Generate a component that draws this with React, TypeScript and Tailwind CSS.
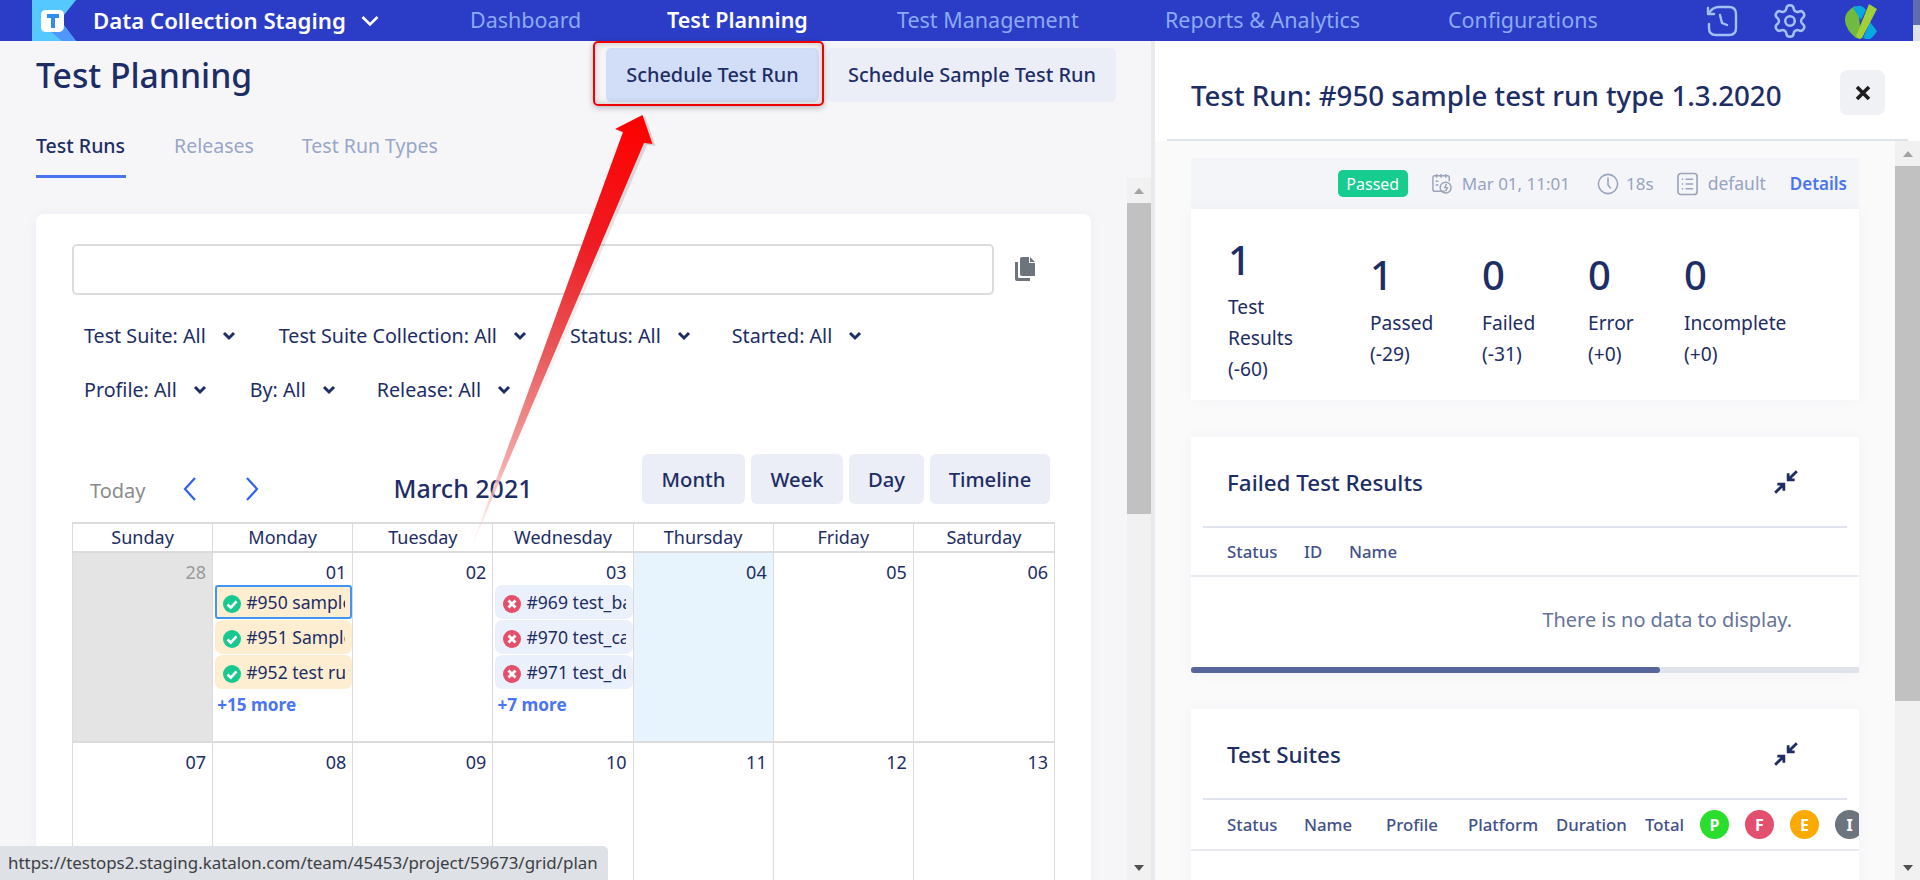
import { Settings } from "lucide-react";

const navy = "text-[#1d2d65]";

const navItems = [
  { label: "Dashboard", w: "w-[110px]", ml: "ml-0", active: false },
  { label: "Test Planning", w: "w-[142px]", ml: "ml-[87px]", active: true },
  { label: "Test Management", w: "w-[181px]", ml: "ml-[88px]", active: false },
  { label: "Reports & Analytics", w: "w-[197px]", ml: "ml-[87px]", active: false },
  { label: "Configurations", w: "w-[150px]", ml: "ml-[86px]", active: false },
];

function Logo() {
  return (
    <svg width="44" height="41" viewBox="0 0 44 41" className="ml-[32px] shrink-0">
      <path d="M0 0H44L28 20L44 41H0Z" fill="#55c9fd" />
      <path d="M18 31L30 41H44L33 27Z" fill="#4f97fb" />
      <path d="M14 10H27Q32 10 32 15V26Q32 32 26 32H14Q9 32 9 27V15Q9 10 14 10Z" fill="#fff" />
      <path d="M15 14H27V18H23V28H19V18H15Z" fill="#2f8cf0" />
    </svg>
  );
}

function HistoryIcon() {
  return (
    <svg width="32" height="32" viewBox="0 0 32 32" fill="none" stroke="#a3c0fb" strokeWidth="2.4" strokeLinecap="round" strokeLinejoin="round" className="shrink-0">
      <path d="M3 8C6 3 9 2 13 2H23Q30 2 30 9V23Q30 30 23 30H10Q3 30 3 23V19" />
      <path d="M2 3V9H8" />
      <path d="M14 10L16 18L21 20" />
    </svg>
  );
}

function AvatarLogo() {
  return (
    <svg width="34" height="36" viewBox="0 0 34 36" className="shrink-0">
      <path d="M11 3Q0 9 1 18Q2 27 12 35L17 36L15 12Z" fill="#6fba3f" />
      <path d="M9 5Q13 2 17 3Q20 4 22 7L17 17Z" fill="#08a8e0" />
      <path d="M26 19L33 28Q31 33 25 37L19 35Z" fill="#08a8e0" />
      <path d="M25 1L33 6L18 35Q14 37 12 33Z" fill="#a3cf37" />
    </svg>
  );
}

function TopBar() {
  return (
    <div className="relative flex h-[41px] shrink-0 items-center bg-[#2b3dc6]">
      <Logo />
      <span className="ml-[17px] w-[252px] shrink-0 text-[22.2px] font-semibold whitespace-nowrap text-white">Data Collection Staging</span>
      <svg width="18" height="12" viewBox="0 0 18 12" className="ml-[16px] shrink-0" fill="none" stroke="#fff" strokeWidth="2.6">
        <path d="M1.5 2L9 9.5L16.5 2" />
      </svg>
      <div className="ml-[91px] flex shrink-0 items-center">
        {navItems.map((n) => (
          <span
            key={n.label}
            className={`${n.w} ${n.ml} shrink-0 text-[21.5px] whitespace-nowrap ${n.active ? "font-semibold text-white" : "text-[#8caaf6]"}`}
          >
            {n.label}
          </span>
        ))}
      </div>
      <div className="ml-[108px] flex shrink-0 items-center">
        <HistoryIcon />
        <Settings size={38} strokeWidth={1.6} className="ml-[33px] shrink-0 text-[#a3c0fb]" />
        <span className="ml-[35px] flex"><AvatarLogo /></span>
      </div>
      <div className="absolute top-0 right-0 h-[41px] w-[7px] bg-[#dfe1ea]">
        <div className="h-[25px] w-full bg-[#5f6caf]" />
      </div>
    </div>
  );
}

function FilterChevron() {
  return (
    <svg width="14" height="10" viewBox="0 0 14 10" fill="none" stroke="#1d2d65" strokeWidth="3" className="ml-[16px] shrink-0">
      <path d="M2 2L7 7L12 2" />
    </svg>
  );
}

function Filter({ label, ml = "ml-0" }: { label: string; ml?: string }) {
  return (
    <div className={`flex items-center ${ml}`}>
      <span className={`text-[19.7px] whitespace-nowrap ${navy}`}>{label}</span>
      <FilterChevron />
    </div>
  );
}

function CheckBadge() {
  return (
    <svg width="18" height="18" viewBox="0 0 18 18" className="shrink-0">
      <circle cx="9" cy="9" r="9" fill="#17c98f" />
      <path d="M4.5 9.5L7.8 12.6L13.5 6.4" fill="none" stroke="#fff" strokeWidth="2.6" />
    </svg>
  );
}

function CrossBadge() {
  return (
    <svg width="18" height="18" viewBox="0 0 18 18" className="shrink-0">
      <circle cx="9" cy="9" r="9" fill="#e3506c" />
      <path d="M5.5 5.5L12.5 12.5M12.5 5.5L5.5 12.5" fill="none" stroke="#fff" strokeWidth="2.8" />
    </svg>
  );
}

function EventChip({ text, kind, selected }: { text: string; kind: "pass" | "fail"; selected?: boolean }) {
  const bg = kind === "pass" ? "bg-[#fdeed1]" : "bg-[#ebf1fc]";
  const border = selected ? "border-2 border-[#3f95f6] rounded-[3px] pl-[6px] pr-[5px]" : "rounded-[7px] pl-[8px] pr-[7px]";
  return (
    <div className={`flex h-[34px] items-center gap-[5px] overflow-hidden ${bg} ${border}`}>
      <span className="mt-[3px] flex">{kind === "pass" ? <CheckBadge /> : <CrossBadge />}</span>
      <span className={`overflow-hidden text-[17.6px] whitespace-nowrap ${navy}`}>{text}</span>
    </div>
  );
}

function DayCell({ day, tone, children }: { day: string; tone?: "muted" | "today"; children?: React.ReactNode }) {
  const bg = tone === "muted" ? "bg-[#e4e4e4]" : tone === "today" ? "bg-[#e8f4fd]" : "bg-white";
  return (
    <div className={`min-w-0 border-r border-[#dcdcdc] last:border-r-0 ${bg}`}>
      <div className={`h-[32px] pt-[6px] pr-[6px] text-right text-[18px] leading-[26px] ${tone === "muted" ? "text-[#9a9a9a]" : navy}`}>{day}</div>
      {children}
    </div>
  );
}

function Calendar() {
  const days = ["Sunday", "Monday", "Tuesday", "Wednesday", "Thursday", "Friday", "Saturday"];
  return (
    <div className="mt-[18px] border-t-2 border-l border-r border-[#dcdcdc]">
      <div className="grid h-[29px] grid-cols-7 border-b-2 border-[#dcdcdc]">
        {days.map((d) => (
          <div key={d} className={`border-r border-[#dcdcdc] text-center text-[18px] leading-[26px] last:border-r-0 ${navy}`}>{d}</div>
        ))}
      </div>
      <div className="grid h-[190px] grid-cols-7 border-b-2 border-[#dcdcdc]">
        <DayCell day="28" tone="muted" />
        <DayCell day="01">
          <div className="ml-[2px] flex flex-col gap-[1px]">
            <EventChip text="#950 sample test run" kind="pass" selected />
            <EventChip text="#951 Sample test" kind="pass" />
            <EventChip text="#952 test run type" kind="pass" />
          </div>
          <div className="mt-[3px] ml-[4px] text-[17.2px] font-bold text-[#4a74f0]">+15 more</div>
        </DayCell>
        <DayCell day="02" />
        <DayCell day="03">
          <div className="ml-[2px] flex flex-col gap-[1px]">
            <EventChip text="#969 test_basic" kind="fail" />
            <EventChip text="#970 test_call" kind="fail" />
            <EventChip text="#971 test_dummy" kind="fail" />
          </div>
          <div className="mt-[3px] ml-[4px] text-[17.2px] font-bold text-[#4a74f0]">+7 more</div>
        </DayCell>
        <DayCell day="04" tone="today" />
        <DayCell day="05" />
        <DayCell day="06" />
      </div>
      <div className="grid h-[140px] grid-cols-7">
        <DayCell day="07" />
        <DayCell day="08" />
        <DayCell day="09" />
        <DayCell day="10" />
        <DayCell day="11" />
        <DayCell day="12" />
        <DayCell day="13" />
      </div>
    </div>
  );
}

function ScrollBar({ className, thumbTop, thumbHeight }: { className: string; thumbTop: string; thumbHeight: string }) {
  return (
    <div className={`flex flex-col items-center bg-[#f1f1f1] ${className}`}>
      <div className={`flex ${thumbTop} w-full items-center justify-center`}>
        <svg width="10" height="6" viewBox="0 0 10 6"><path d="M5 0L10 6H0Z" fill="#a3a3a3" /></svg>
      </div>
      <div className={`w-full bg-[#c1c1c1] ${thumbHeight}`} />
      <div className="flex-1" />
      <div className="flex h-[24px] items-center">
        <svg width="10" height="6" viewBox="0 0 10 6"><path d="M0 0H10L5 6Z" fill="#505050" /></svg>
      </div>
    </div>
  );
}

function LeftPane() {
  return (
    <div className="flex w-[1155px] shrink-0 overflow-hidden border-r-4 border-[#e9e9ee] bg-[#f6f6f9]">
      <div className="w-[1127px] shrink-0 pl-[36px]">
        <div className="flex h-[60px] items-start justify-between pt-[7px] pr-[11px]">
          <h1 className={`text-[33.7px] leading-[54px] font-medium ${navy}`}>Test Planning</h1>
          <div className="flex gap-[9px]">
            <button className={`h-[54px] w-[213px] rounded-[5px] bg-[#d2def8] text-[19.9px] font-medium ${navy}`}>Schedule Test Run</button>
            <button className={`h-[54px] w-[288px] rounded-[5px] bg-[#ebeef7] text-[19.9px] font-medium ${navy}`}>Schedule Sample Test Run</button>
          </div>
        </div>
        <div className="mt-[30px] flex gap-[48px] text-[19.5px] leading-[30px] text-[#98a6c7]">
          <div className="h-[47px] border-b-[3px] border-[#4a74f0] pr-[1px] font-medium text-[#1d2d65]">Test Runs</div>
          <div>Releases</div>
          <div>Test Run Types</div>
        </div>
        <div className="mt-[36px] h-[700px] w-[1055px] rounded-[8px] bg-white px-[36px] pt-[30px] shadow-[0_0_12px_rgba(30,40,90,0.04)]">
          <div className="flex items-center">
            <div className="h-[51px] w-[922px] rounded-[5px] border-2 border-[#dcdcdc]" />
            <svg width="22" height="24" viewBox="0 0 22 24" className="mt-[-2px] ml-[20px]">
              <path d="M8 0H15V6H21V19H8Q6 19 6 17V2Q6 0 8 0Z" fill="#6c757d" />
              <path d="M16 0L21 5H16Z" fill="#6c757d" />
              <path d="M1 5H4V20Q4 21 5 21H16V24H3Q1 24 1 22Z" fill="#6c757d" />
            </svg>
          </div>
          <div className="mt-[27px] flex h-[28px] items-center pl-[12px]">
            <Filter label="Test Suite: All" />
            <Filter label="Test Suite Collection: All" ml="ml-[43px]" />
            <Filter label="Status: All" ml="ml-[43px]" />
            <Filter label="Started: All" ml="ml-[41px]" />
          </div>
          <div className="mt-[26px] flex h-[28px] items-center pl-[12px]">
            <Filter label="Profile: All" />
            <Filter label="By: All" ml="ml-[43px]" />
            <Filter label="Release: All" ml="ml-[41px]" />
          </div>
          <div className="mt-[50px] flex h-[50px] items-end">
            <span className="mb-[-2px] ml-[18px] text-[20px] text-[#8b8b8b]">Today</span>
            <svg width="16" height="26" viewBox="0 0 16 26" fill="none" stroke="#2f62f2" strokeWidth="2.2" className="mb-[2px] ml-[36px]">
              <path d="M13 2L3 13L13 24" />
            </svg>
            <svg width="16" height="26" viewBox="0 0 16 26" fill="none" stroke="#2f62f2" strokeWidth="2.2" className="mb-[2px] ml-[46px]">
              <path d="M3 2L13 13L3 24" />
            </svg>
            <span className={`mb-[-3px] ml-[134px] text-[25px] font-medium ${navy}`}>March 2021</span>
            <div className="mr-[5px] ml-auto flex gap-[6px]">
              {[
                { t: "Month", w: "w-[103px]" },
                { t: "Week", w: "w-[92px]" },
                { t: "Day", w: "w-[75px]" },
                { t: "Timeline", w: "w-[120px]" },
              ].map((b) => (
                <div key={b.t} className={`flex h-[50px] items-center justify-center rounded-[6px] bg-[#ebeef7] text-[20.2px] font-medium ${b.w} ${navy}`}>{b.t}</div>
              ))}
            </div>
          </div>
          <Calendar />
        </div>
      </div>
      <ScrollBar className="mt-[137px] h-[702px] w-[24px]" thumbTop="h-[25px]" thumbHeight="h-[311px]" />
    </div>
  );
}

function CollapseIcon() {
  return (
    <svg width="26" height="26" viewBox="0 0 24 24" fill="none" stroke="#1d2d65" strokeWidth="2.6">
      <path d="M22 2L14 10M14 4V10H20" />
      <path d="M2 22L10 14M4 14H10V20" />
    </svg>
  );
}

function Stat({ value, label, delta, ml }: { value: string; label: string; delta: string; ml: string }) {
  return (
    <div className={`w-0 ${ml}`}>
      <div className={`text-[40px] leading-[50px] font-medium ${navy}`}>{value}</div>
      <div className={`mt-[7px] text-[19.2px] leading-[31px] whitespace-nowrap ${navy}`}>{label}</div>
      <div className={`text-[19.2px] leading-[31px] ${navy}`}>{delta}</div>
    </div>
  );
}

function CardHeading({ title }: { title: string }) {
  return (
    <div className="mx-[12px] flex h-[91px] items-center justify-between border-b-2 border-[#e1e4ee] pr-[48px] pl-[24px]">
      <span className={`mt-[2px] text-[22.4px] font-medium ${navy}`}>{title}</span>
      <CollapseIcon />
    </div>
  );
}

function RightPane() {
  const colH = "shrink-0 text-[16.8px] font-medium whitespace-nowrap text-[#42518a]";
  return (
    <div className="flex min-w-0 flex-1 flex-col bg-white">
      <div className="mx-[12px] flex h-[100px] shrink-0 items-center justify-between border-b-2 border-[#dfe3ea] pt-[5px] pr-[23px] pl-[24px]">
        <span className={`mt-[7px] text-[27.7px] font-medium whitespace-nowrap ${navy}`}>Test Run: #950 sample test run type 1.3.2020</span>
        <button className="flex h-[45px] w-[45px] shrink-0 items-center justify-center rounded-[7px] bg-[#f0f1f5]">
          <svg width="16" height="16" viewBox="0 0 16 16" stroke="#1e1e1e" strokeWidth="3.6">
            <path d="M2 2L14 14M14 2L2 14" />
          </svg>
        </button>
      </div>
      <div className="flex min-h-0 flex-1 overflow-hidden">
        <div className="w-[740px] shrink-0 overflow-hidden bg-[#fafafb] pt-[17px] pl-[36px]">
          <div className="w-[668px]">
            <div className="flex h-[51px] items-center justify-end bg-[#f4f5f8] pr-[12px] text-[17px] text-[#97a3c2]">
              <span className="flex h-[27px] w-[70px] shrink-0 items-center justify-center rounded-[5px] bg-[#17cc8f] text-[16px] text-white">Passed</span>
              <svg width="20" height="24" viewBox="0 0 22 24" fill="none" stroke="#9aa5b8" strokeWidth="1.6" className="ml-[24px] shrink-0">
                <path d="M14 20H3Q1 20 1 18V5Q1 3 3 3H17Q19 3 19 5V9" />
                <path d="M5 1V5M10 1V5M15 1V5M4 9H7M4 13H7" />
                <circle cx="15" cy="16" r="6" />
                <path d="M16 12L14 16H17L15 20" />
              </svg>
              <span className="ml-[10px] whitespace-nowrap">Mar 01, 11:01</span>
              <svg width="22" height="24" viewBox="0 0 24 24" fill="none" stroke="#9aa5b8" strokeWidth="1.7" className="ml-[27px] shrink-0">
                <circle cx="12" cy="12" r="10.5" />
                <path d="M12 5V13L15 17" />
              </svg>
              <span className="ml-[7px]">18s</span>
              <svg width="21" height="24" viewBox="0 0 22 24" fill="none" stroke="#9aa5b8" strokeWidth="1.7" className="ml-[23px] shrink-0">
                <rect x="1" y="1" width="20" height="22" rx="3" />
                <path d="M5 7H6.5M9 7H17M5 12H6.5M9 12H17M5 17H6.5M9 17H17" />
              </svg>
              <span className="ml-[10px] text-[17.5px]">default</span>
              <span className="ml-[24px] font-semibold text-[#4a74f0]">Details</span>
            </div>
            <div className="flex h-[191px] bg-white pl-[37px] shadow-[0_0_16px_rgba(30,40,90,0.03)]">
              <div className="w-[142px] pt-[26px]">
                <div className={`text-[40px] leading-[50px] font-medium ${navy}`}>1</div>
                <div className={`mt-[6px] text-[19.2px] leading-[31px] ${navy}`}>Test<br />Results<br />(-60)</div>
              </div>
              <div className="flex pt-[41px]">
                <Stat value="1" label="Passed" delta="(-29)" ml="ml-0" />
                <Stat value="0" label="Failed" delta="(-31)" ml="ml-[112px]" />
                <Stat value="0" label="Error" delta="(+0)" ml="ml-[106px]" />
                <Stat value="0" label="Incomplete" delta="(+0)" ml="ml-[96px]" />
              </div>
            </div>

            <div className="mt-[37px] h-[236px] bg-white shadow-[0_0_16px_rgba(30,40,90,0.03)]">
              <CardHeading title="Failed Test Results" />
              <div className="flex h-[49px] items-center border-b-2 border-[#e9ebf1] pl-[36px]">
                <span className={`w-[77px] ${colH}`}>Status</span>
                <span className={`w-[45px] ${colH}`}>ID</span>
                <span className={colH}>Name</span>
              </div>
              <div className="flex h-[90px] items-center justify-end pr-[67px] pb-[5px] text-[19.9px] text-[#66739a]">There is no data to display.</div>
              <div className="h-[6px] bg-[#dfe3ea]">
                <div className="h-full w-[469px] rounded-[3px] bg-[#56659a]" />
              </div>
            </div>

            <div className="mt-[36px] h-[300px] bg-white shadow-[0_0_16px_rgba(30,40,90,0.03)]">
              <CardHeading title="Test Suites" />
              <div className="flex h-[51px] items-center overflow-hidden border-b-2 border-[#e9ebf1] pl-[36px]">
                <span className={`w-[77px] ${colH}`}>Status</span>
                <span className={`w-[82px] ${colH}`}>Name</span>
                <span className={`w-[82px] ${colH}`}>Profile</span>
                <span className={`w-[88px] ${colH}`}>Platform</span>
                <span className={`w-[89px] ${colH}`}>Duration</span>
                <span className={`w-[55px] ${colH}`}>Total</span>
                {[
                  { t: "P", c: "bg-[#2bdd2d]" },
                  { t: "F", c: "bg-[#e2506e]" },
                  { t: "E", c: "bg-[#fbaa00]" },
                  { t: "I", c: "bg-[#6c757d]" },
                ].map((b) => (
                  <span key={b.t} className={`mr-[16px] flex h-[29px] w-[29px] shrink-0 items-center justify-center rounded-full text-[16px] font-bold text-white ${b.c}`}>{b.t}</span>
                ))}
              </div>
            </div>
          </div>
        </div>
        <ScrollBar className="h-full w-[25px]" thumbTop="h-[25px]" thumbHeight="h-[535px]" />
      </div>
    </div>
  );
}

function Annotation() {
  return (
    <>
      <div className="absolute top-[41px] left-[593px] h-[65px] w-[231px] rounded-[5px] border-2 border-[#f00000] shadow-[0_2px_6px_rgba(0,0,0,0.25),inset_0_0_7px_rgba(0,0,0,0.22)]" />
      <svg width="220" height="450" viewBox="460 110 220 450" className="absolute top-[110px] left-[460px]">
        <defs>
          <linearGradient id="tail" x1="642" y1="115" x2="471" y2="551" gradientUnits="userSpaceOnUse">
            <stop offset="0" stopColor="#ff0000" />
            <stop offset="0.3" stopColor="#ee1c22" />
            <stop offset="0.55" stopColor="#e85a5c" />
            <stop offset="0.8" stopColor="#f3a9a9" />
            <stop offset="1" stopColor="#ffdddd" stopOpacity="0.2" />
          </linearGradient>
          <linearGradient id="tailShadow" x1="642" y1="115" x2="471" y2="551" gradientUnits="userSpaceOnUse">
            <stop offset="0" stopColor="#000" stopOpacity="0.15" />
            <stop offset="0.8" stopColor="#000" stopOpacity="0" />
          </linearGradient>
        </defs>
        <path d="M642.5 115L615 129L624 133L470 551L644 143L652.5 144Z" fill="url(#tailShadow)" transform="translate(3 2)" />
        <path d="M642.5 115L615 129L623 132L470 551L644 143L652.5 144Z" fill="url(#tail)" />
      </svg>
    </>
  );
}

export default function App() {
  return (
    <div className="relative flex h-[880px] w-[1920px] flex-col overflow-hidden bg-white font-['Noto_Sans',sans-serif]">
      <TopBar />
      <div className="flex min-h-0 flex-1">
        <LeftPane />
        <RightPane />
      </div>
      <Annotation />
      <div className="absolute bottom-0 left-0 flex h-[34px] w-[608px] items-center rounded-tr-[5px] bg-[#dee1e6] pl-[8px] text-[16.9px] whitespace-nowrap text-[#3c4043]">
        https://testops2.staging.katalon.com/team/45453/project/59673/grid/plan
      </div>
    </div>
  );
}
